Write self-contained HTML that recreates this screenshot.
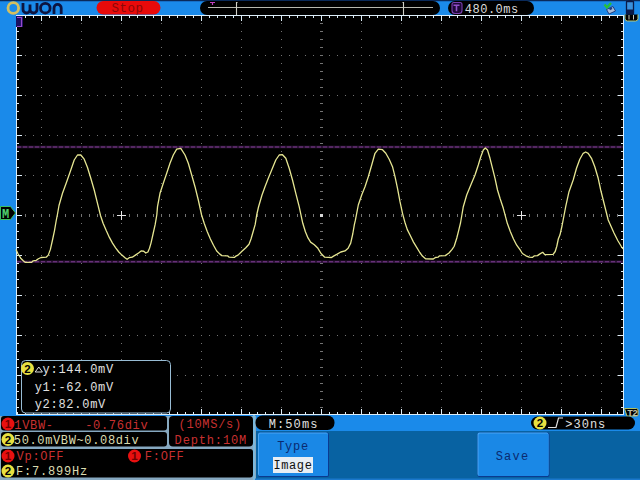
<!DOCTYPE html>
<html><head><meta charset="utf-8"><style>
html,body{margin:0;padding:0;width:640px;height:480px;overflow:hidden;background:#1a8aea;}
svg{display:block;font-family:"Liberation Mono";}
</style></head><body>
<svg width="640" height="480" viewBox="0 0 640 480">
<rect x="0" y="0" width="640" height="1" fill="#0a2a5a"/>
<rect x="0" y="1" width="640" height="1" fill="#1670c8"/>
<rect x="16" y="15" width="608" height="400" fill="#000"/>
<path d="M41 23h1v1h-1zM41 31h1v1h-1zM41 39h1v1h-1zM41 47h1v1h-1zM41 55h1v1h-1zM41 63h1v1h-1zM41 71h1v1h-1zM41 79h1v1h-1zM41 87h1v1h-1zM41 95h1v1h-1zM41 103h1v1h-1zM41 111h1v1h-1zM41 119h1v1h-1zM41 127h1v1h-1zM41 135h1v1h-1zM41 143h1v1h-1zM41 151h1v1h-1zM41 159h1v1h-1zM41 167h1v1h-1zM41 175h1v1h-1zM41 183h1v1h-1zM41 191h1v1h-1zM41 199h1v1h-1zM41 207h1v1h-1zM41 215h1v1h-1zM41 223h1v1h-1zM41 231h1v1h-1zM41 239h1v1h-1zM41 247h1v1h-1zM41 255h1v1h-1zM41 263h1v1h-1zM41 271h1v1h-1zM41 279h1v1h-1zM41 287h1v1h-1zM41 295h1v1h-1zM41 303h1v1h-1zM41 311h1v1h-1zM41 319h1v1h-1zM41 327h1v1h-1zM41 335h1v1h-1zM41 343h1v1h-1zM41 351h1v1h-1zM41 359h1v1h-1zM41 367h1v1h-1zM41 375h1v1h-1zM41 383h1v1h-1zM41 391h1v1h-1zM41 399h1v1h-1zM41 407h1v1h-1zM81 23h1v1h-1zM81 31h1v1h-1zM81 39h1v1h-1zM81 47h1v1h-1zM81 55h1v1h-1zM81 63h1v1h-1zM81 71h1v1h-1zM81 79h1v1h-1zM81 87h1v1h-1zM81 95h1v1h-1zM81 103h1v1h-1zM81 111h1v1h-1zM81 119h1v1h-1zM81 127h1v1h-1zM81 135h1v1h-1zM81 143h1v1h-1zM81 151h1v1h-1zM81 159h1v1h-1zM81 167h1v1h-1zM81 175h1v1h-1zM81 183h1v1h-1zM81 191h1v1h-1zM81 199h1v1h-1zM81 207h1v1h-1zM81 215h1v1h-1zM81 223h1v1h-1zM81 231h1v1h-1zM81 239h1v1h-1zM81 247h1v1h-1zM81 255h1v1h-1zM81 263h1v1h-1zM81 271h1v1h-1zM81 279h1v1h-1zM81 287h1v1h-1zM81 295h1v1h-1zM81 303h1v1h-1zM81 311h1v1h-1zM81 319h1v1h-1zM81 327h1v1h-1zM81 335h1v1h-1zM81 343h1v1h-1zM81 351h1v1h-1zM81 359h1v1h-1zM81 367h1v1h-1zM81 375h1v1h-1zM81 383h1v1h-1zM81 391h1v1h-1zM81 399h1v1h-1zM81 407h1v1h-1zM121 23h1v1h-1zM121 31h1v1h-1zM121 39h1v1h-1zM121 47h1v1h-1zM121 55h1v1h-1zM121 63h1v1h-1zM121 71h1v1h-1zM121 79h1v1h-1zM121 87h1v1h-1zM121 95h1v1h-1zM121 103h1v1h-1zM121 111h1v1h-1zM121 119h1v1h-1zM121 127h1v1h-1zM121 135h1v1h-1zM121 143h1v1h-1zM121 151h1v1h-1zM121 159h1v1h-1zM121 167h1v1h-1zM121 175h1v1h-1zM121 183h1v1h-1zM121 191h1v1h-1zM121 199h1v1h-1zM121 207h1v1h-1zM121 215h1v1h-1zM121 223h1v1h-1zM121 231h1v1h-1zM121 239h1v1h-1zM121 247h1v1h-1zM121 255h1v1h-1zM121 263h1v1h-1zM121 271h1v1h-1zM121 279h1v1h-1zM121 287h1v1h-1zM121 295h1v1h-1zM121 303h1v1h-1zM121 311h1v1h-1zM121 319h1v1h-1zM121 327h1v1h-1zM121 335h1v1h-1zM121 343h1v1h-1zM121 351h1v1h-1zM121 359h1v1h-1zM121 367h1v1h-1zM121 375h1v1h-1zM121 383h1v1h-1zM121 391h1v1h-1zM121 399h1v1h-1zM121 407h1v1h-1zM161 23h1v1h-1zM161 31h1v1h-1zM161 39h1v1h-1zM161 47h1v1h-1zM161 55h1v1h-1zM161 63h1v1h-1zM161 71h1v1h-1zM161 79h1v1h-1zM161 87h1v1h-1zM161 95h1v1h-1zM161 103h1v1h-1zM161 111h1v1h-1zM161 119h1v1h-1zM161 127h1v1h-1zM161 135h1v1h-1zM161 143h1v1h-1zM161 151h1v1h-1zM161 159h1v1h-1zM161 167h1v1h-1zM161 175h1v1h-1zM161 183h1v1h-1zM161 191h1v1h-1zM161 199h1v1h-1zM161 207h1v1h-1zM161 215h1v1h-1zM161 223h1v1h-1zM161 231h1v1h-1zM161 239h1v1h-1zM161 247h1v1h-1zM161 255h1v1h-1zM161 263h1v1h-1zM161 271h1v1h-1zM161 279h1v1h-1zM161 287h1v1h-1zM161 295h1v1h-1zM161 303h1v1h-1zM161 311h1v1h-1zM161 319h1v1h-1zM161 327h1v1h-1zM161 335h1v1h-1zM161 343h1v1h-1zM161 351h1v1h-1zM161 359h1v1h-1zM161 367h1v1h-1zM161 375h1v1h-1zM161 383h1v1h-1zM161 391h1v1h-1zM161 399h1v1h-1zM161 407h1v1h-1zM201 23h1v1h-1zM201 31h1v1h-1zM201 39h1v1h-1zM201 47h1v1h-1zM201 55h1v1h-1zM201 63h1v1h-1zM201 71h1v1h-1zM201 79h1v1h-1zM201 87h1v1h-1zM201 95h1v1h-1zM201 103h1v1h-1zM201 111h1v1h-1zM201 119h1v1h-1zM201 127h1v1h-1zM201 135h1v1h-1zM201 143h1v1h-1zM201 151h1v1h-1zM201 159h1v1h-1zM201 167h1v1h-1zM201 175h1v1h-1zM201 183h1v1h-1zM201 191h1v1h-1zM201 199h1v1h-1zM201 207h1v1h-1zM201 215h1v1h-1zM201 223h1v1h-1zM201 231h1v1h-1zM201 239h1v1h-1zM201 247h1v1h-1zM201 255h1v1h-1zM201 263h1v1h-1zM201 271h1v1h-1zM201 279h1v1h-1zM201 287h1v1h-1zM201 295h1v1h-1zM201 303h1v1h-1zM201 311h1v1h-1zM201 319h1v1h-1zM201 327h1v1h-1zM201 335h1v1h-1zM201 343h1v1h-1zM201 351h1v1h-1zM201 359h1v1h-1zM201 367h1v1h-1zM201 375h1v1h-1zM201 383h1v1h-1zM201 391h1v1h-1zM201 399h1v1h-1zM201 407h1v1h-1zM241 23h1v1h-1zM241 31h1v1h-1zM241 39h1v1h-1zM241 47h1v1h-1zM241 55h1v1h-1zM241 63h1v1h-1zM241 71h1v1h-1zM241 79h1v1h-1zM241 87h1v1h-1zM241 95h1v1h-1zM241 103h1v1h-1zM241 111h1v1h-1zM241 119h1v1h-1zM241 127h1v1h-1zM241 135h1v1h-1zM241 143h1v1h-1zM241 151h1v1h-1zM241 159h1v1h-1zM241 167h1v1h-1zM241 175h1v1h-1zM241 183h1v1h-1zM241 191h1v1h-1zM241 199h1v1h-1zM241 207h1v1h-1zM241 215h1v1h-1zM241 223h1v1h-1zM241 231h1v1h-1zM241 239h1v1h-1zM241 247h1v1h-1zM241 255h1v1h-1zM241 263h1v1h-1zM241 271h1v1h-1zM241 279h1v1h-1zM241 287h1v1h-1zM241 295h1v1h-1zM241 303h1v1h-1zM241 311h1v1h-1zM241 319h1v1h-1zM241 327h1v1h-1zM241 335h1v1h-1zM241 343h1v1h-1zM241 351h1v1h-1zM241 359h1v1h-1zM241 367h1v1h-1zM241 375h1v1h-1zM241 383h1v1h-1zM241 391h1v1h-1zM241 399h1v1h-1zM241 407h1v1h-1zM281 23h1v1h-1zM281 31h1v1h-1zM281 39h1v1h-1zM281 47h1v1h-1zM281 55h1v1h-1zM281 63h1v1h-1zM281 71h1v1h-1zM281 79h1v1h-1zM281 87h1v1h-1zM281 95h1v1h-1zM281 103h1v1h-1zM281 111h1v1h-1zM281 119h1v1h-1zM281 127h1v1h-1zM281 135h1v1h-1zM281 143h1v1h-1zM281 151h1v1h-1zM281 159h1v1h-1zM281 167h1v1h-1zM281 175h1v1h-1zM281 183h1v1h-1zM281 191h1v1h-1zM281 199h1v1h-1zM281 207h1v1h-1zM281 215h1v1h-1zM281 223h1v1h-1zM281 231h1v1h-1zM281 239h1v1h-1zM281 247h1v1h-1zM281 255h1v1h-1zM281 263h1v1h-1zM281 271h1v1h-1zM281 279h1v1h-1zM281 287h1v1h-1zM281 295h1v1h-1zM281 303h1v1h-1zM281 311h1v1h-1zM281 319h1v1h-1zM281 327h1v1h-1zM281 335h1v1h-1zM281 343h1v1h-1zM281 351h1v1h-1zM281 359h1v1h-1zM281 367h1v1h-1zM281 375h1v1h-1zM281 383h1v1h-1zM281 391h1v1h-1zM281 399h1v1h-1zM281 407h1v1h-1zM361 23h1v1h-1zM361 31h1v1h-1zM361 39h1v1h-1zM361 47h1v1h-1zM361 55h1v1h-1zM361 63h1v1h-1zM361 71h1v1h-1zM361 79h1v1h-1zM361 87h1v1h-1zM361 95h1v1h-1zM361 103h1v1h-1zM361 111h1v1h-1zM361 119h1v1h-1zM361 127h1v1h-1zM361 135h1v1h-1zM361 143h1v1h-1zM361 151h1v1h-1zM361 159h1v1h-1zM361 167h1v1h-1zM361 175h1v1h-1zM361 183h1v1h-1zM361 191h1v1h-1zM361 199h1v1h-1zM361 207h1v1h-1zM361 215h1v1h-1zM361 223h1v1h-1zM361 231h1v1h-1zM361 239h1v1h-1zM361 247h1v1h-1zM361 255h1v1h-1zM361 263h1v1h-1zM361 271h1v1h-1zM361 279h1v1h-1zM361 287h1v1h-1zM361 295h1v1h-1zM361 303h1v1h-1zM361 311h1v1h-1zM361 319h1v1h-1zM361 327h1v1h-1zM361 335h1v1h-1zM361 343h1v1h-1zM361 351h1v1h-1zM361 359h1v1h-1zM361 367h1v1h-1zM361 375h1v1h-1zM361 383h1v1h-1zM361 391h1v1h-1zM361 399h1v1h-1zM361 407h1v1h-1zM401 23h1v1h-1zM401 31h1v1h-1zM401 39h1v1h-1zM401 47h1v1h-1zM401 55h1v1h-1zM401 63h1v1h-1zM401 71h1v1h-1zM401 79h1v1h-1zM401 87h1v1h-1zM401 95h1v1h-1zM401 103h1v1h-1zM401 111h1v1h-1zM401 119h1v1h-1zM401 127h1v1h-1zM401 135h1v1h-1zM401 143h1v1h-1zM401 151h1v1h-1zM401 159h1v1h-1zM401 167h1v1h-1zM401 175h1v1h-1zM401 183h1v1h-1zM401 191h1v1h-1zM401 199h1v1h-1zM401 207h1v1h-1zM401 215h1v1h-1zM401 223h1v1h-1zM401 231h1v1h-1zM401 239h1v1h-1zM401 247h1v1h-1zM401 255h1v1h-1zM401 263h1v1h-1zM401 271h1v1h-1zM401 279h1v1h-1zM401 287h1v1h-1zM401 295h1v1h-1zM401 303h1v1h-1zM401 311h1v1h-1zM401 319h1v1h-1zM401 327h1v1h-1zM401 335h1v1h-1zM401 343h1v1h-1zM401 351h1v1h-1zM401 359h1v1h-1zM401 367h1v1h-1zM401 375h1v1h-1zM401 383h1v1h-1zM401 391h1v1h-1zM401 399h1v1h-1zM401 407h1v1h-1zM441 23h1v1h-1zM441 31h1v1h-1zM441 39h1v1h-1zM441 47h1v1h-1zM441 55h1v1h-1zM441 63h1v1h-1zM441 71h1v1h-1zM441 79h1v1h-1zM441 87h1v1h-1zM441 95h1v1h-1zM441 103h1v1h-1zM441 111h1v1h-1zM441 119h1v1h-1zM441 127h1v1h-1zM441 135h1v1h-1zM441 143h1v1h-1zM441 151h1v1h-1zM441 159h1v1h-1zM441 167h1v1h-1zM441 175h1v1h-1zM441 183h1v1h-1zM441 191h1v1h-1zM441 199h1v1h-1zM441 207h1v1h-1zM441 215h1v1h-1zM441 223h1v1h-1zM441 231h1v1h-1zM441 239h1v1h-1zM441 247h1v1h-1zM441 255h1v1h-1zM441 263h1v1h-1zM441 271h1v1h-1zM441 279h1v1h-1zM441 287h1v1h-1zM441 295h1v1h-1zM441 303h1v1h-1zM441 311h1v1h-1zM441 319h1v1h-1zM441 327h1v1h-1zM441 335h1v1h-1zM441 343h1v1h-1zM441 351h1v1h-1zM441 359h1v1h-1zM441 367h1v1h-1zM441 375h1v1h-1zM441 383h1v1h-1zM441 391h1v1h-1zM441 399h1v1h-1zM441 407h1v1h-1zM481 23h1v1h-1zM481 31h1v1h-1zM481 39h1v1h-1zM481 47h1v1h-1zM481 55h1v1h-1zM481 63h1v1h-1zM481 71h1v1h-1zM481 79h1v1h-1zM481 87h1v1h-1zM481 95h1v1h-1zM481 103h1v1h-1zM481 111h1v1h-1zM481 119h1v1h-1zM481 127h1v1h-1zM481 135h1v1h-1zM481 143h1v1h-1zM481 151h1v1h-1zM481 159h1v1h-1zM481 167h1v1h-1zM481 175h1v1h-1zM481 183h1v1h-1zM481 191h1v1h-1zM481 199h1v1h-1zM481 207h1v1h-1zM481 215h1v1h-1zM481 223h1v1h-1zM481 231h1v1h-1zM481 239h1v1h-1zM481 247h1v1h-1zM481 255h1v1h-1zM481 263h1v1h-1zM481 271h1v1h-1zM481 279h1v1h-1zM481 287h1v1h-1zM481 295h1v1h-1zM481 303h1v1h-1zM481 311h1v1h-1zM481 319h1v1h-1zM481 327h1v1h-1zM481 335h1v1h-1zM481 343h1v1h-1zM481 351h1v1h-1zM481 359h1v1h-1zM481 367h1v1h-1zM481 375h1v1h-1zM481 383h1v1h-1zM481 391h1v1h-1zM481 399h1v1h-1zM481 407h1v1h-1zM521 23h1v1h-1zM521 31h1v1h-1zM521 39h1v1h-1zM521 47h1v1h-1zM521 55h1v1h-1zM521 63h1v1h-1zM521 71h1v1h-1zM521 79h1v1h-1zM521 87h1v1h-1zM521 95h1v1h-1zM521 103h1v1h-1zM521 111h1v1h-1zM521 119h1v1h-1zM521 127h1v1h-1zM521 135h1v1h-1zM521 143h1v1h-1zM521 151h1v1h-1zM521 159h1v1h-1zM521 167h1v1h-1zM521 175h1v1h-1zM521 183h1v1h-1zM521 191h1v1h-1zM521 199h1v1h-1zM521 207h1v1h-1zM521 215h1v1h-1zM521 223h1v1h-1zM521 231h1v1h-1zM521 239h1v1h-1zM521 247h1v1h-1zM521 255h1v1h-1zM521 263h1v1h-1zM521 271h1v1h-1zM521 279h1v1h-1zM521 287h1v1h-1zM521 295h1v1h-1zM521 303h1v1h-1zM521 311h1v1h-1zM521 319h1v1h-1zM521 327h1v1h-1zM521 335h1v1h-1zM521 343h1v1h-1zM521 351h1v1h-1zM521 359h1v1h-1zM521 367h1v1h-1zM521 375h1v1h-1zM521 383h1v1h-1zM521 391h1v1h-1zM521 399h1v1h-1zM521 407h1v1h-1zM561 23h1v1h-1zM561 31h1v1h-1zM561 39h1v1h-1zM561 47h1v1h-1zM561 55h1v1h-1zM561 63h1v1h-1zM561 71h1v1h-1zM561 79h1v1h-1zM561 87h1v1h-1zM561 95h1v1h-1zM561 103h1v1h-1zM561 111h1v1h-1zM561 119h1v1h-1zM561 127h1v1h-1zM561 135h1v1h-1zM561 143h1v1h-1zM561 151h1v1h-1zM561 159h1v1h-1zM561 167h1v1h-1zM561 175h1v1h-1zM561 183h1v1h-1zM561 191h1v1h-1zM561 199h1v1h-1zM561 207h1v1h-1zM561 215h1v1h-1zM561 223h1v1h-1zM561 231h1v1h-1zM561 239h1v1h-1zM561 247h1v1h-1zM561 255h1v1h-1zM561 263h1v1h-1zM561 271h1v1h-1zM561 279h1v1h-1zM561 287h1v1h-1zM561 295h1v1h-1zM561 303h1v1h-1zM561 311h1v1h-1zM561 319h1v1h-1zM561 327h1v1h-1zM561 335h1v1h-1zM561 343h1v1h-1zM561 351h1v1h-1zM561 359h1v1h-1zM561 367h1v1h-1zM561 375h1v1h-1zM561 383h1v1h-1zM561 391h1v1h-1zM561 399h1v1h-1zM561 407h1v1h-1zM601 23h1v1h-1zM601 31h1v1h-1zM601 39h1v1h-1zM601 47h1v1h-1zM601 55h1v1h-1zM601 63h1v1h-1zM601 71h1v1h-1zM601 79h1v1h-1zM601 87h1v1h-1zM601 95h1v1h-1zM601 103h1v1h-1zM601 111h1v1h-1zM601 119h1v1h-1zM601 127h1v1h-1zM601 135h1v1h-1zM601 143h1v1h-1zM601 151h1v1h-1zM601 159h1v1h-1zM601 167h1v1h-1zM601 175h1v1h-1zM601 183h1v1h-1zM601 191h1v1h-1zM601 199h1v1h-1zM601 207h1v1h-1zM601 215h1v1h-1zM601 223h1v1h-1zM601 231h1v1h-1zM601 239h1v1h-1zM601 247h1v1h-1zM601 255h1v1h-1zM601 263h1v1h-1zM601 271h1v1h-1zM601 279h1v1h-1zM601 287h1v1h-1zM601 295h1v1h-1zM601 303h1v1h-1zM601 311h1v1h-1zM601 319h1v1h-1zM601 327h1v1h-1zM601 335h1v1h-1zM601 343h1v1h-1zM601 351h1v1h-1zM601 359h1v1h-1zM601 367h1v1h-1zM601 375h1v1h-1zM601 383h1v1h-1zM601 391h1v1h-1zM601 399h1v1h-1zM601 407h1v1h-1zM25 55h1v1h-1zM33 55h1v1h-1zM49 55h1v1h-1zM57 55h1v1h-1zM65 55h1v1h-1zM73 55h1v1h-1zM89 55h1v1h-1zM97 55h1v1h-1zM105 55h1v1h-1zM113 55h1v1h-1zM129 55h1v1h-1zM137 55h1v1h-1zM145 55h1v1h-1zM153 55h1v1h-1zM169 55h1v1h-1zM177 55h1v1h-1zM185 55h1v1h-1zM193 55h1v1h-1zM209 55h1v1h-1zM217 55h1v1h-1zM225 55h1v1h-1zM233 55h1v1h-1zM249 55h1v1h-1zM257 55h1v1h-1zM265 55h1v1h-1zM273 55h1v1h-1zM289 55h1v1h-1zM297 55h1v1h-1zM305 55h1v1h-1zM313 55h1v1h-1zM329 55h1v1h-1zM337 55h1v1h-1zM345 55h1v1h-1zM353 55h1v1h-1zM369 55h1v1h-1zM377 55h1v1h-1zM385 55h1v1h-1zM393 55h1v1h-1zM409 55h1v1h-1zM417 55h1v1h-1zM425 55h1v1h-1zM433 55h1v1h-1zM449 55h1v1h-1zM457 55h1v1h-1zM465 55h1v1h-1zM473 55h1v1h-1zM489 55h1v1h-1zM497 55h1v1h-1zM505 55h1v1h-1zM513 55h1v1h-1zM529 55h1v1h-1zM537 55h1v1h-1zM545 55h1v1h-1zM553 55h1v1h-1zM569 55h1v1h-1zM577 55h1v1h-1zM585 55h1v1h-1zM593 55h1v1h-1zM609 55h1v1h-1zM617 55h1v1h-1zM25 95h1v1h-1zM33 95h1v1h-1zM49 95h1v1h-1zM57 95h1v1h-1zM65 95h1v1h-1zM73 95h1v1h-1zM89 95h1v1h-1zM97 95h1v1h-1zM105 95h1v1h-1zM113 95h1v1h-1zM129 95h1v1h-1zM137 95h1v1h-1zM145 95h1v1h-1zM153 95h1v1h-1zM169 95h1v1h-1zM177 95h1v1h-1zM185 95h1v1h-1zM193 95h1v1h-1zM209 95h1v1h-1zM217 95h1v1h-1zM225 95h1v1h-1zM233 95h1v1h-1zM249 95h1v1h-1zM257 95h1v1h-1zM265 95h1v1h-1zM273 95h1v1h-1zM289 95h1v1h-1zM297 95h1v1h-1zM305 95h1v1h-1zM313 95h1v1h-1zM329 95h1v1h-1zM337 95h1v1h-1zM345 95h1v1h-1zM353 95h1v1h-1zM369 95h1v1h-1zM377 95h1v1h-1zM385 95h1v1h-1zM393 95h1v1h-1zM409 95h1v1h-1zM417 95h1v1h-1zM425 95h1v1h-1zM433 95h1v1h-1zM449 95h1v1h-1zM457 95h1v1h-1zM465 95h1v1h-1zM473 95h1v1h-1zM489 95h1v1h-1zM497 95h1v1h-1zM505 95h1v1h-1zM513 95h1v1h-1zM529 95h1v1h-1zM537 95h1v1h-1zM545 95h1v1h-1zM553 95h1v1h-1zM569 95h1v1h-1zM577 95h1v1h-1zM585 95h1v1h-1zM593 95h1v1h-1zM609 95h1v1h-1zM617 95h1v1h-1zM25 135h1v1h-1zM33 135h1v1h-1zM49 135h1v1h-1zM57 135h1v1h-1zM65 135h1v1h-1zM73 135h1v1h-1zM89 135h1v1h-1zM97 135h1v1h-1zM105 135h1v1h-1zM113 135h1v1h-1zM129 135h1v1h-1zM137 135h1v1h-1zM145 135h1v1h-1zM153 135h1v1h-1zM169 135h1v1h-1zM177 135h1v1h-1zM185 135h1v1h-1zM193 135h1v1h-1zM209 135h1v1h-1zM217 135h1v1h-1zM225 135h1v1h-1zM233 135h1v1h-1zM249 135h1v1h-1zM257 135h1v1h-1zM265 135h1v1h-1zM273 135h1v1h-1zM289 135h1v1h-1zM297 135h1v1h-1zM305 135h1v1h-1zM313 135h1v1h-1zM329 135h1v1h-1zM337 135h1v1h-1zM345 135h1v1h-1zM353 135h1v1h-1zM369 135h1v1h-1zM377 135h1v1h-1zM385 135h1v1h-1zM393 135h1v1h-1zM409 135h1v1h-1zM417 135h1v1h-1zM425 135h1v1h-1zM433 135h1v1h-1zM449 135h1v1h-1zM457 135h1v1h-1zM465 135h1v1h-1zM473 135h1v1h-1zM489 135h1v1h-1zM497 135h1v1h-1zM505 135h1v1h-1zM513 135h1v1h-1zM529 135h1v1h-1zM537 135h1v1h-1zM545 135h1v1h-1zM553 135h1v1h-1zM569 135h1v1h-1zM577 135h1v1h-1zM585 135h1v1h-1zM593 135h1v1h-1zM609 135h1v1h-1zM617 135h1v1h-1zM25 175h1v1h-1zM33 175h1v1h-1zM49 175h1v1h-1zM57 175h1v1h-1zM65 175h1v1h-1zM73 175h1v1h-1zM89 175h1v1h-1zM97 175h1v1h-1zM105 175h1v1h-1zM113 175h1v1h-1zM129 175h1v1h-1zM137 175h1v1h-1zM145 175h1v1h-1zM153 175h1v1h-1zM169 175h1v1h-1zM177 175h1v1h-1zM185 175h1v1h-1zM193 175h1v1h-1zM209 175h1v1h-1zM217 175h1v1h-1zM225 175h1v1h-1zM233 175h1v1h-1zM249 175h1v1h-1zM257 175h1v1h-1zM265 175h1v1h-1zM273 175h1v1h-1zM289 175h1v1h-1zM297 175h1v1h-1zM305 175h1v1h-1zM313 175h1v1h-1zM329 175h1v1h-1zM337 175h1v1h-1zM345 175h1v1h-1zM353 175h1v1h-1zM369 175h1v1h-1zM377 175h1v1h-1zM385 175h1v1h-1zM393 175h1v1h-1zM409 175h1v1h-1zM417 175h1v1h-1zM425 175h1v1h-1zM433 175h1v1h-1zM449 175h1v1h-1zM457 175h1v1h-1zM465 175h1v1h-1zM473 175h1v1h-1zM489 175h1v1h-1zM497 175h1v1h-1zM505 175h1v1h-1zM513 175h1v1h-1zM529 175h1v1h-1zM537 175h1v1h-1zM545 175h1v1h-1zM553 175h1v1h-1zM569 175h1v1h-1zM577 175h1v1h-1zM585 175h1v1h-1zM593 175h1v1h-1zM609 175h1v1h-1zM617 175h1v1h-1zM25 255h1v1h-1zM33 255h1v1h-1zM49 255h1v1h-1zM57 255h1v1h-1zM65 255h1v1h-1zM73 255h1v1h-1zM89 255h1v1h-1zM97 255h1v1h-1zM105 255h1v1h-1zM113 255h1v1h-1zM129 255h1v1h-1zM137 255h1v1h-1zM145 255h1v1h-1zM153 255h1v1h-1zM169 255h1v1h-1zM177 255h1v1h-1zM185 255h1v1h-1zM193 255h1v1h-1zM209 255h1v1h-1zM217 255h1v1h-1zM225 255h1v1h-1zM233 255h1v1h-1zM249 255h1v1h-1zM257 255h1v1h-1zM265 255h1v1h-1zM273 255h1v1h-1zM289 255h1v1h-1zM297 255h1v1h-1zM305 255h1v1h-1zM313 255h1v1h-1zM329 255h1v1h-1zM337 255h1v1h-1zM345 255h1v1h-1zM353 255h1v1h-1zM369 255h1v1h-1zM377 255h1v1h-1zM385 255h1v1h-1zM393 255h1v1h-1zM409 255h1v1h-1zM417 255h1v1h-1zM425 255h1v1h-1zM433 255h1v1h-1zM449 255h1v1h-1zM457 255h1v1h-1zM465 255h1v1h-1zM473 255h1v1h-1zM489 255h1v1h-1zM497 255h1v1h-1zM505 255h1v1h-1zM513 255h1v1h-1zM529 255h1v1h-1zM537 255h1v1h-1zM545 255h1v1h-1zM553 255h1v1h-1zM569 255h1v1h-1zM577 255h1v1h-1zM585 255h1v1h-1zM593 255h1v1h-1zM609 255h1v1h-1zM617 255h1v1h-1zM25 295h1v1h-1zM33 295h1v1h-1zM49 295h1v1h-1zM57 295h1v1h-1zM65 295h1v1h-1zM73 295h1v1h-1zM89 295h1v1h-1zM97 295h1v1h-1zM105 295h1v1h-1zM113 295h1v1h-1zM129 295h1v1h-1zM137 295h1v1h-1zM145 295h1v1h-1zM153 295h1v1h-1zM169 295h1v1h-1zM177 295h1v1h-1zM185 295h1v1h-1zM193 295h1v1h-1zM209 295h1v1h-1zM217 295h1v1h-1zM225 295h1v1h-1zM233 295h1v1h-1zM249 295h1v1h-1zM257 295h1v1h-1zM265 295h1v1h-1zM273 295h1v1h-1zM289 295h1v1h-1zM297 295h1v1h-1zM305 295h1v1h-1zM313 295h1v1h-1zM329 295h1v1h-1zM337 295h1v1h-1zM345 295h1v1h-1zM353 295h1v1h-1zM369 295h1v1h-1zM377 295h1v1h-1zM385 295h1v1h-1zM393 295h1v1h-1zM409 295h1v1h-1zM417 295h1v1h-1zM425 295h1v1h-1zM433 295h1v1h-1zM449 295h1v1h-1zM457 295h1v1h-1zM465 295h1v1h-1zM473 295h1v1h-1zM489 295h1v1h-1zM497 295h1v1h-1zM505 295h1v1h-1zM513 295h1v1h-1zM529 295h1v1h-1zM537 295h1v1h-1zM545 295h1v1h-1zM553 295h1v1h-1zM569 295h1v1h-1zM577 295h1v1h-1zM585 295h1v1h-1zM593 295h1v1h-1zM609 295h1v1h-1zM617 295h1v1h-1zM25 335h1v1h-1zM33 335h1v1h-1zM49 335h1v1h-1zM57 335h1v1h-1zM65 335h1v1h-1zM73 335h1v1h-1zM89 335h1v1h-1zM97 335h1v1h-1zM105 335h1v1h-1zM113 335h1v1h-1zM129 335h1v1h-1zM137 335h1v1h-1zM145 335h1v1h-1zM153 335h1v1h-1zM169 335h1v1h-1zM177 335h1v1h-1zM185 335h1v1h-1zM193 335h1v1h-1zM209 335h1v1h-1zM217 335h1v1h-1zM225 335h1v1h-1zM233 335h1v1h-1zM249 335h1v1h-1zM257 335h1v1h-1zM265 335h1v1h-1zM273 335h1v1h-1zM289 335h1v1h-1zM297 335h1v1h-1zM305 335h1v1h-1zM313 335h1v1h-1zM329 335h1v1h-1zM337 335h1v1h-1zM345 335h1v1h-1zM353 335h1v1h-1zM369 335h1v1h-1zM377 335h1v1h-1zM385 335h1v1h-1zM393 335h1v1h-1zM409 335h1v1h-1zM417 335h1v1h-1zM425 335h1v1h-1zM433 335h1v1h-1zM449 335h1v1h-1zM457 335h1v1h-1zM465 335h1v1h-1zM473 335h1v1h-1zM489 335h1v1h-1zM497 335h1v1h-1zM505 335h1v1h-1zM513 335h1v1h-1zM529 335h1v1h-1zM537 335h1v1h-1zM545 335h1v1h-1zM553 335h1v1h-1zM569 335h1v1h-1zM577 335h1v1h-1zM585 335h1v1h-1zM593 335h1v1h-1zM609 335h1v1h-1zM617 335h1v1h-1zM25 375h1v1h-1zM33 375h1v1h-1zM49 375h1v1h-1zM57 375h1v1h-1zM65 375h1v1h-1zM73 375h1v1h-1zM89 375h1v1h-1zM97 375h1v1h-1zM105 375h1v1h-1zM113 375h1v1h-1zM129 375h1v1h-1zM137 375h1v1h-1zM145 375h1v1h-1zM153 375h1v1h-1zM169 375h1v1h-1zM177 375h1v1h-1zM185 375h1v1h-1zM193 375h1v1h-1zM209 375h1v1h-1zM217 375h1v1h-1zM225 375h1v1h-1zM233 375h1v1h-1zM249 375h1v1h-1zM257 375h1v1h-1zM265 375h1v1h-1zM273 375h1v1h-1zM289 375h1v1h-1zM297 375h1v1h-1zM305 375h1v1h-1zM313 375h1v1h-1zM329 375h1v1h-1zM337 375h1v1h-1zM345 375h1v1h-1zM353 375h1v1h-1zM369 375h1v1h-1zM377 375h1v1h-1zM385 375h1v1h-1zM393 375h1v1h-1zM409 375h1v1h-1zM417 375h1v1h-1zM425 375h1v1h-1zM433 375h1v1h-1zM449 375h1v1h-1zM457 375h1v1h-1zM465 375h1v1h-1zM473 375h1v1h-1zM489 375h1v1h-1zM497 375h1v1h-1zM505 375h1v1h-1zM513 375h1v1h-1zM529 375h1v1h-1zM537 375h1v1h-1zM545 375h1v1h-1zM553 375h1v1h-1zM569 375h1v1h-1zM577 375h1v1h-1zM585 375h1v1h-1zM593 375h1v1h-1zM609 375h1v1h-1zM617 375h1v1h-1zM320 23h3v1h-3zM320 31h3v1h-3zM320 39h3v1h-3zM320 47h3v1h-3zM320 55h3v1h-3zM320 63h3v1h-3zM320 71h3v1h-3zM320 79h3v1h-3zM320 87h3v1h-3zM320 95h3v1h-3zM320 103h3v1h-3zM320 111h3v1h-3zM320 119h3v1h-3zM320 127h3v1h-3zM320 135h3v1h-3zM320 143h3v1h-3zM320 151h3v1h-3zM320 159h3v1h-3zM320 167h3v1h-3zM320 175h3v1h-3zM320 183h3v1h-3zM320 191h3v1h-3zM320 199h3v1h-3zM320 207h3v1h-3zM320 223h3v1h-3zM320 231h3v1h-3zM320 239h3v1h-3zM320 247h3v1h-3zM320 255h3v1h-3zM320 263h3v1h-3zM320 271h3v1h-3zM320 279h3v1h-3zM320 287h3v1h-3zM320 295h3v1h-3zM320 303h3v1h-3zM320 311h3v1h-3zM320 319h3v1h-3zM320 327h3v1h-3zM320 335h3v1h-3zM320 343h3v1h-3zM320 351h3v1h-3zM320 359h3v1h-3zM320 367h3v1h-3zM320 375h3v1h-3zM320 383h3v1h-3zM320 391h3v1h-3zM320 399h3v1h-3zM320 407h3v1h-3zM25 214h1v3h-1zM33 214h1v3h-1zM41 214h1v3h-1zM49 214h1v3h-1zM57 214h1v3h-1zM65 214h1v3h-1zM73 214h1v3h-1zM81 214h1v3h-1zM89 214h1v3h-1zM97 214h1v3h-1zM105 214h1v3h-1zM113 214h1v3h-1zM121 214h1v3h-1zM129 214h1v3h-1zM137 214h1v3h-1zM145 214h1v3h-1zM153 214h1v3h-1zM161 214h1v3h-1zM169 214h1v3h-1zM177 214h1v3h-1zM185 214h1v3h-1zM193 214h1v3h-1zM201 214h1v3h-1zM209 214h1v3h-1zM217 214h1v3h-1zM225 214h1v3h-1zM233 214h1v3h-1zM241 214h1v3h-1zM249 214h1v3h-1zM257 214h1v3h-1zM265 214h1v3h-1zM273 214h1v3h-1zM281 214h1v3h-1zM289 214h1v3h-1zM297 214h1v3h-1zM305 214h1v3h-1zM313 214h1v3h-1zM329 214h1v3h-1zM337 214h1v3h-1zM345 214h1v3h-1zM353 214h1v3h-1zM361 214h1v3h-1zM369 214h1v3h-1zM377 214h1v3h-1zM385 214h1v3h-1zM393 214h1v3h-1zM401 214h1v3h-1zM409 214h1v3h-1zM417 214h1v3h-1zM425 214h1v3h-1zM433 214h1v3h-1zM441 214h1v3h-1zM449 214h1v3h-1zM457 214h1v3h-1zM465 214h1v3h-1zM473 214h1v3h-1zM481 214h1v3h-1zM489 214h1v3h-1zM497 214h1v3h-1zM505 214h1v3h-1zM513 214h1v3h-1zM521 214h1v3h-1zM529 214h1v3h-1zM537 214h1v3h-1zM545 214h1v3h-1zM553 214h1v3h-1zM561 214h1v3h-1zM569 214h1v3h-1zM577 214h1v3h-1zM585 214h1v3h-1zM593 214h1v3h-1zM601 214h1v3h-1zM609 214h1v3h-1zM617 214h1v3h-1z" fill="#737373"/>
<path d="M17 16h1v2h-1zM17 412h1v2h-1zM25 16h1v2h-1zM25 412h1v2h-1zM33 16h1v2h-1zM33 412h1v2h-1zM41 16h1v5h-1zM41 409h1v5h-1zM49 16h1v2h-1zM49 412h1v2h-1zM57 16h1v2h-1zM57 412h1v2h-1zM65 16h1v2h-1zM65 412h1v2h-1zM73 16h1v2h-1zM73 412h1v2h-1zM81 16h1v5h-1zM81 409h1v5h-1zM89 16h1v2h-1zM89 412h1v2h-1zM97 16h1v2h-1zM97 412h1v2h-1zM105 16h1v2h-1zM105 412h1v2h-1zM113 16h1v2h-1zM113 412h1v2h-1zM121 16h1v5h-1zM121 409h1v5h-1zM129 16h1v2h-1zM129 412h1v2h-1zM137 16h1v2h-1zM137 412h1v2h-1zM145 16h1v2h-1zM145 412h1v2h-1zM153 16h1v2h-1zM153 412h1v2h-1zM161 16h1v5h-1zM161 409h1v5h-1zM169 16h1v2h-1zM169 412h1v2h-1zM177 16h1v2h-1zM177 412h1v2h-1zM185 16h1v2h-1zM185 412h1v2h-1zM193 16h1v2h-1zM193 412h1v2h-1zM201 16h1v5h-1zM201 409h1v5h-1zM209 16h1v2h-1zM209 412h1v2h-1zM217 16h1v2h-1zM217 412h1v2h-1zM225 16h1v2h-1zM225 412h1v2h-1zM233 16h1v2h-1zM233 412h1v2h-1zM241 16h1v5h-1zM241 409h1v5h-1zM249 16h1v2h-1zM249 412h1v2h-1zM257 16h1v2h-1zM257 412h1v2h-1zM265 16h1v2h-1zM265 412h1v2h-1zM273 16h1v2h-1zM273 412h1v2h-1zM281 16h1v5h-1zM281 409h1v5h-1zM289 16h1v2h-1zM289 412h1v2h-1zM297 16h1v2h-1zM297 412h1v2h-1zM305 16h1v2h-1zM305 412h1v2h-1zM313 16h1v2h-1zM313 412h1v2h-1zM321 16h1v5h-1zM321 409h1v5h-1zM329 16h1v2h-1zM329 412h1v2h-1zM337 16h1v2h-1zM337 412h1v2h-1zM345 16h1v2h-1zM345 412h1v2h-1zM353 16h1v2h-1zM353 412h1v2h-1zM361 16h1v5h-1zM361 409h1v5h-1zM369 16h1v2h-1zM369 412h1v2h-1zM377 16h1v2h-1zM377 412h1v2h-1zM385 16h1v2h-1zM385 412h1v2h-1zM393 16h1v2h-1zM393 412h1v2h-1zM401 16h1v5h-1zM401 409h1v5h-1zM409 16h1v2h-1zM409 412h1v2h-1zM417 16h1v2h-1zM417 412h1v2h-1zM425 16h1v2h-1zM425 412h1v2h-1zM433 16h1v2h-1zM433 412h1v2h-1zM441 16h1v5h-1zM441 409h1v5h-1zM449 16h1v2h-1zM449 412h1v2h-1zM457 16h1v2h-1zM457 412h1v2h-1zM465 16h1v2h-1zM465 412h1v2h-1zM473 16h1v2h-1zM473 412h1v2h-1zM481 16h1v5h-1zM481 409h1v5h-1zM489 16h1v2h-1zM489 412h1v2h-1zM497 16h1v2h-1zM497 412h1v2h-1zM505 16h1v2h-1zM505 412h1v2h-1zM513 16h1v2h-1zM513 412h1v2h-1zM521 16h1v5h-1zM521 409h1v5h-1zM529 16h1v2h-1zM529 412h1v2h-1zM537 16h1v2h-1zM537 412h1v2h-1zM545 16h1v2h-1zM545 412h1v2h-1zM553 16h1v2h-1zM553 412h1v2h-1zM561 16h1v5h-1zM561 409h1v5h-1zM569 16h1v2h-1zM569 412h1v2h-1zM577 16h1v2h-1zM577 412h1v2h-1zM585 16h1v2h-1zM585 412h1v2h-1zM593 16h1v2h-1zM593 412h1v2h-1zM601 16h1v5h-1zM601 409h1v5h-1zM609 16h1v2h-1zM609 412h1v2h-1zM617 16h1v2h-1zM617 412h1v2h-1zM17 23h2v1h-2zM621 23h2v1h-2zM17 31h2v1h-2zM621 31h2v1h-2zM17 39h2v1h-2zM621 39h2v1h-2zM17 47h2v1h-2zM621 47h2v1h-2zM17 55h5v1h-5zM618 55h5v1h-5zM17 63h2v1h-2zM621 63h2v1h-2zM17 71h2v1h-2zM621 71h2v1h-2zM17 79h2v1h-2zM621 79h2v1h-2zM17 87h2v1h-2zM621 87h2v1h-2zM17 95h5v1h-5zM618 95h5v1h-5zM17 103h2v1h-2zM621 103h2v1h-2zM17 111h2v1h-2zM621 111h2v1h-2zM17 119h2v1h-2zM621 119h2v1h-2zM17 127h2v1h-2zM621 127h2v1h-2zM17 135h5v1h-5zM618 135h5v1h-5zM17 143h2v1h-2zM621 143h2v1h-2zM17 151h2v1h-2zM621 151h2v1h-2zM17 159h2v1h-2zM621 159h2v1h-2zM17 167h2v1h-2zM621 167h2v1h-2zM17 175h5v1h-5zM618 175h5v1h-5zM17 183h2v1h-2zM621 183h2v1h-2zM17 191h2v1h-2zM621 191h2v1h-2zM17 199h2v1h-2zM621 199h2v1h-2zM17 207h2v1h-2zM621 207h2v1h-2zM17 215h5v1h-5zM618 215h5v1h-5zM17 223h2v1h-2zM621 223h2v1h-2zM17 231h2v1h-2zM621 231h2v1h-2zM17 239h2v1h-2zM621 239h2v1h-2zM17 247h2v1h-2zM621 247h2v1h-2zM17 255h5v1h-5zM618 255h5v1h-5zM17 263h2v1h-2zM621 263h2v1h-2zM17 271h2v1h-2zM621 271h2v1h-2zM17 279h2v1h-2zM621 279h2v1h-2zM17 287h2v1h-2zM621 287h2v1h-2zM17 295h5v1h-5zM618 295h5v1h-5zM17 303h2v1h-2zM621 303h2v1h-2zM17 311h2v1h-2zM621 311h2v1h-2zM17 319h2v1h-2zM621 319h2v1h-2zM17 327h2v1h-2zM621 327h2v1h-2zM17 335h5v1h-5zM618 335h5v1h-5zM17 343h2v1h-2zM621 343h2v1h-2zM17 351h2v1h-2zM621 351h2v1h-2zM17 359h2v1h-2zM621 359h2v1h-2zM17 367h2v1h-2zM621 367h2v1h-2zM17 375h5v1h-5zM618 375h5v1h-5zM17 383h2v1h-2zM621 383h2v1h-2zM17 391h2v1h-2zM621 391h2v1h-2zM17 399h2v1h-2zM621 399h2v1h-2zM17 407h2v1h-2zM621 407h2v1h-2z" fill="#dcedf8"/>
<rect x="117" y="215" width="9" height="1" fill="#e8e8e8"/>
<rect x="121" y="211" width="1" height="9" fill="#e8e8e8"/>
<rect x="517" y="215" width="9" height="1" fill="#e8e8e8"/>
<rect x="521" y="211" width="1" height="9" fill="#e8e8e8"/>
<rect x="320" y="214" width="3" height="3" fill="#d8d8d8"/>
<rect x="16.5" y="15.5" width="607" height="399" fill="none" stroke="#dcedf8" stroke-width="1"/>
<line x1="17" y1="147" x2="623" y2="147" stroke="#2e1438" stroke-width="2.4"/>
<line x1="17" y1="147" x2="623" y2="147" stroke="#7a3a8c" stroke-width="1.1" stroke-dasharray="4 2"/>
<line x1="17" y1="261.8" x2="623" y2="261.8" stroke="#2e1438" stroke-width="2.4"/>
<line x1="17" y1="261.8" x2="623" y2="261.8" stroke="#7a3a8c" stroke-width="1.1" stroke-dasharray="4 2"/>
<polyline points="16,249.4 18.1,254 20.7,258.2 23.3,260.8 25.4,262.4 31.6,262.4 33.2,260.8 36.3,260.3 38.4,258.75 41,257.5 46.2,257.2 48.3,255.1 50.4,249.4 52.5,240 54.5,230.6 56.1,221.25 57.7,213 59,205.5 62.5,193.3 66.7,181.7 70.8,170 74.2,160 77.5,155 80.8,155 84.2,159.2 87.5,167.5 90.8,178.3 94.2,190 97.5,203.3 100.5,215.5 103.1,223.3 106.25,230.6 109.4,237.4 112.5,243.1 115.6,247.8 118.75,252 121.9,255.1 125,257.7 127.1,259.3 129.2,257.7 132.3,257.2 135.4,255.1 138.5,253 141.1,250.9 143.75,251.25 145.8,253 147.9,252 149.5,248.3 151,243.1 153.1,233.75 155.2,224.4 156.8,215 157.5,206.7 160,193.3 163.3,183.3 166.7,173.3 170,163.3 173.3,155 176.7,149.2 180.8,148.3 185,155 188.3,163.3 191.7,175 195,186.7 198.3,200 201.6,215 204.2,223.3 207.3,231.7 210.4,239 213.5,245.2 216.7,251 219.8,254.1 221.9,255.6 227.6,255.8 229.2,257.2 234.4,257.4 235.9,256.1 238,255.1 241.7,251.5 245.8,247.8 249,244.2 251,239 253.1,231.7 255.2,224.4 256.7,215 258.5,207 262,195 265,186.7 268.3,178.3 271.7,170 275.8,160 279.2,155 282.5,154.7 285.8,158.3 289.2,168.3 292.5,180 295.8,193.3 299.2,206.7 301.7,218.3 302.8,223.3 305.4,231.7 308,237.9 310.6,242.1 314.3,244.7 317.9,248.3 321,253.5 324.7,257.2 331.5,257.5 333.5,256.1 336.7,254.4 340.8,252 345,250.9 348.1,248.3 350.7,243.1 352.8,233.75 354.4,224.4 355.4,220.2 358.3,205 361.7,195 365,186.7 368.3,176.7 371.7,165 375,153.3 378.3,149.2 382.5,149.7 385.8,153.3 389.2,159.2 392.5,166.7 395,176.7 397.5,188.3 400,201.7 402.5,213.3 405.2,223.3 407.3,229.6 410.4,235.8 413.5,242.1 416.7,247.3 419.8,252.5 422.4,256.1 425.5,258.75 433.3,259 435.4,257.5 438,257.2 439.6,255.8 445.3,255.6 449,253 452.1,249.4 454.2,246.25 456.8,238 458.9,229.6 460.5,223 463.3,206.7 466.7,195 470.8,185 475,175 478.3,165 480.8,156.7 483.3,150 485.3,148 487.5,150 490,158.3 492.5,168.3 495,178.3 497.5,190 500,198.3 503.3,208.3 507.3,223.3 510.4,231.7 513.5,239 516.7,245.2 519.8,249.4 522.4,253.5 526,255.8 529.2,257.2 532.3,257.4 534.4,255.8 537.5,255.6 539.6,254.1 542.7,252.3 544.8,254.6 553.1,254.4 555.2,251.5 556.8,246.25 558.3,239 560,234.8 562,226 565.7,206.7 569,191.7 573.2,180 576.5,168.3 579.8,159.2 583.2,153.3 585.7,152 588.2,153.3 591.5,158.3 594.8,166.7 598.2,178.3 600.7,190 603.2,200 605.7,210 608.2,220 614,233 617.75,240.5 621.5,246.75 623,249" fill="none" stroke="#e6e692" stroke-width="1.3" stroke-linejoin="round"/>
<rect x="21.5" y="360.5" width="149" height="52.5" rx="4" fill="#000" stroke="#98bcd4" stroke-width="1"/>
<path d="M0.5 206.5h10l5 6.5l-5 6.5h-10z" fill="#000" stroke="#3cc060" stroke-width="1"/>
<text x="2" y="218" font-family="Liberation Mono" font-size="12" font-weight="bold" fill="#50d070">M</text>
<rect x="16" y="16" width="7" height="11" fill="#1a1060"/>
<path d="M17 17.5h4.5v9h-4.5" fill="none" stroke="#9848c8" stroke-width="1.2"/>
<path d="M624.5 408.5h12a1.5 1.5 0 0 1 1.5 1.5v4.5a1.5 1.5 0 0 1 -1.5 1.5h-9.5z" fill="#000" stroke="#b0c060" stroke-width="1"/>
<text x="627.3" y="415.6" font-family="Liberation Mono" font-size="9.5" font-weight="bold" fill="#c0c0a8" letter-spacing="-0.8">T2</text>
<circle cx="13.3" cy="8" r="5.3" fill="none" stroke="#d4c060" stroke-width="2.8"/>
<path d="M23 3v6.5a3.5 3.5 0 0 0 7 0v-5M30 9.5a3.5 3.5 0 0 0 7 0v-6.5" fill="none" stroke="#0c1440" stroke-width="2.8"/>
<circle cx="45.3" cy="8.2" r="4.8" fill="none" stroke="#0c1440" stroke-width="2.8"/>
<path d="M54 14v-6a3.6 3.6 0 0 1 7.2 0v6" fill="none" stroke="#0c1440" stroke-width="2.8"/>
<rect x="96.5" y="1" width="64" height="13.5" rx="6.7" fill="#e80a0a"/>
<text x="111.5" y="12.2" font-family="Liberation Mono" font-size="12.5" fill="#8a0808" letter-spacing="0.5">Stop</text>
<rect x="200" y="1" width="240" height="14" rx="7" fill="#000"/>
<rect x="208" y="7" width="225" height="1" fill="#b8b8b0"/>
<path d="M236.5 15v-12.5h1" fill="none" stroke="#d0d0c8" stroke-width="1.1"/>
<path d="M403.5 15v-12.5h-1" fill="none" stroke="#d0d0c8" stroke-width="1.1"/>
<path d="M210 2.5h5M212.5 2.5v2.5" stroke="#c040c0" stroke-width="1.2"/>
<rect x="448" y="1" width="86" height="14" rx="7" fill="#000"/>
<path d="M452 4.5a2 2 0 0 1 2 -2h6a2 2 0 0 1 2 2v6a3 3 0 0 1 -3 3h-4a3 3 0 0 1 -3 -3z" fill="#1e0838" stroke="#7a40b0" stroke-width="1.1"/>
<path d="M453.5 5.2h6M456.5 5.2v6" fill="none" stroke="#9050c8" stroke-width="1.6"/>
<text x="464.8" y="13.2" font-family="Liberation Mono" font-size="12" fill="#dcdcdc" letter-spacing="0.5">480.0ms</text>
<path d="M606.5 9.5l6.5 -3l2.5 4.5l-6.5 3z" fill="#a8bcd8" stroke="#203c80" stroke-width="1"/>
<path d="M609 8.5l2.5 -1.2l1 1.8l-2.5 1.2z" fill="#203c80"/>
<path d="M604.5 4.5l2.5 3l4 -4.5" fill="none" stroke="#28c038" stroke-width="2.4"/>
<rect x="626.5" y="1.5" width="7" height="12.5" rx="0.5" fill="#3a90dc" stroke="#0a1a48" stroke-width="1.3"/>
<rect x="626.5" y="9.5" width="7" height="4.5" fill="#0a1a48"/>
<rect x="628.5" y="0" width="3" height="1.5" fill="#0a1a48"/>
<path d="M625 14.5v4a2.5 2.5 0 0 0 2.5 2.5h8a2.5 2.5 0 0 0 2.5 -2.5v-4" fill="#000" stroke="#b8cc78" stroke-width="1"/>
<path d="M629 15v4.5M633.5 15v4.5" stroke="#c8c8b8" stroke-width="1"/>
<rect x="0" y="415" width="256" height="65" fill="#86a8c0"/>
<rect x="0" y="415" width="256" height="1" fill="#1a8aea"/>
<rect x="256" y="431" width="384" height="49" fill="#0862a2"/>
<rect x="1" y="416" width="166" height="14.5" rx="3" fill="#000"/>
<rect x="1" y="432" width="166" height="14.5" rx="3" fill="#000"/>
<rect x="169" y="416" width="84" height="30.5" rx="4" fill="#000"/>
<rect x="1" y="449" width="252" height="28.5" rx="3" fill="#000"/>
<rect x="255.5" y="415.5" width="79" height="14.5" rx="7" fill="#000"/>
<rect x="531" y="416.5" width="104" height="13" rx="6.5" fill="#000"/>
<rect x="258" y="432.5" width="71" height="44.5" rx="2" fill="#0a3a90"/>
<rect x="258" y="432.5" width="70" height="43.5" rx="2" fill="#4aa6f4"/>
<rect x="259" y="433.5" width="69" height="42.5" rx="1.5" fill="#1a88e6"/>
<rect x="477.5" y="432.5" width="72.0" height="44.5" rx="2" fill="#0a3a90"/>
<rect x="477.5" y="432.5" width="71.0" height="43.5" rx="2" fill="#4aa6f4"/>
<rect x="478.5" y="433.5" width="70.0" height="42.5" rx="1.5" fill="#1a88e6"/>
<rect x="253" y="415" width="2" height="65" fill="#7ab8dc"/>
<rect x="255" y="478.5" width="385" height="1.5" fill="#1a78cc"/>
<rect x="273" y="457" width="40" height="16" fill="#e8eef4"/>
<circle cx="8" cy="424" r="6.5" fill="#e81010"/>
<text x="4.7" y="428.2" font-family="Liberation Sans" font-size="11.5" font-weight="bold" fill="#700000">1</text>
<text x="14.3" y="429.3" font-family="Liberation Mono" font-size="12" letter-spacing="0.68" fill="#c83030" xml:space="preserve" >1VBW-    -0.76div</text>
<circle cx="8" cy="439.5" r="6.5" fill="#e8e040"/>
<text x="4.7" y="443.7" font-family="Liberation Sans" font-size="11.5" font-weight="bold" fill="#000">2</text>
<text x="13.8" y="443.8" font-family="Liberation Mono" font-size="12" letter-spacing="0.64" fill="#dcdcb0" xml:space="preserve" >50.0mVBW~0.08div</text>
<text x="178.6" y="428" font-family="Liberation Mono" font-size="12" letter-spacing="0.71" fill="#c83030" xml:space="preserve" >(10MS/s)</text>
<text x="174.6" y="443.6" font-family="Liberation Mono" font-size="12" letter-spacing="0.85" fill="#c83030" xml:space="preserve" >Depth:10M</text>
<circle cx="8" cy="456" r="6.5" fill="#e81010"/>
<text x="4.7" y="460.2" font-family="Liberation Sans" font-size="11.5" font-weight="bold" fill="#700000">1</text>
<text x="16.5" y="460.3" font-family="Liberation Mono" font-size="12" letter-spacing="0.74" fill="#c83030" xml:space="preserve" >Vp:OFF</text>
<circle cx="134.5" cy="456" r="6.5" fill="#e81010"/>
<text x="131.2" y="460.2" font-family="Liberation Sans" font-size="11.5" font-weight="bold" fill="#700000">1</text>
<text x="144.8" y="460.3" font-family="Liberation Mono" font-size="12" letter-spacing="0.74" fill="#c83030" xml:space="preserve" >F:OFF</text>
<circle cx="8" cy="471" r="6.5" fill="#e8e040"/>
<text x="4.7" y="475.2" font-family="Liberation Sans" font-size="11.5" font-weight="bold" fill="#000">2</text>
<text x="15.9" y="475.3" font-family="Liberation Mono" font-size="12" letter-spacing="0.8" fill="#dcdcb0" xml:space="preserve" >F:7.899Hz</text>
<text x="268.7" y="427.6" font-family="Liberation Mono" font-size="12" letter-spacing="1.1" fill="#e0e0e0" xml:space="preserve" >M:50ms</text>
<text x="277.2" y="450" font-family="Liberation Mono" font-size="12" letter-spacing="0.7" fill="#0a2a70" xml:space="preserve" >Type</text>
<text x="273.4" y="469" font-family="Liberation Mono" font-size="12" letter-spacing="0.62" fill="#101010" xml:space="preserve" >Image</text>
<text x="495.7" y="459.5" font-family="Liberation Mono" font-size="12" letter-spacing="1.2" fill="#0a2a70" xml:space="preserve" >Save</text>
<circle cx="540" cy="423" r="6.5" fill="#e8e040"/>
<text x="536.7" y="427.2" font-family="Liberation Sans" font-size="11.5" font-weight="bold" fill="#000">2</text>
<path d="M548 427.5h8l2.5 -9.5h4.5" fill="none" stroke="#e0e0e0" stroke-width="1.2"/>
<text x="565.3" y="428" font-family="Liberation Mono" font-size="12" letter-spacing="1.0" fill="#e0e0e0" xml:space="preserve" >&gt;30ns</text>
<circle cx="27.5" cy="368.5" r="6.5" fill="#e8e040"/>
<text x="24.2" y="372.7" font-family="Liberation Sans" font-size="11.5" font-weight="bold" fill="#000">2</text>
<path d="M38.8 367l-3.6 5h7.2z" fill="none" stroke="#e0e0e0" stroke-width="1"/>
<text x="34.7" y="373" font-family="Liberation Mono" font-size="12" letter-spacing="0.72" fill="#e0e0e0" xml:space="preserve" > y:144.0mV</text>
<text x="34.7" y="391" font-family="Liberation Mono" font-size="12" letter-spacing="0.72" fill="#e0e0e0" xml:space="preserve" >y1:-62.0mV</text>
<text x="34.7" y="408" font-family="Liberation Mono" font-size="12" letter-spacing="0.72" fill="#e0e0e0" xml:space="preserve" >y2:82.0mV</text>
</svg>
</body></html>
